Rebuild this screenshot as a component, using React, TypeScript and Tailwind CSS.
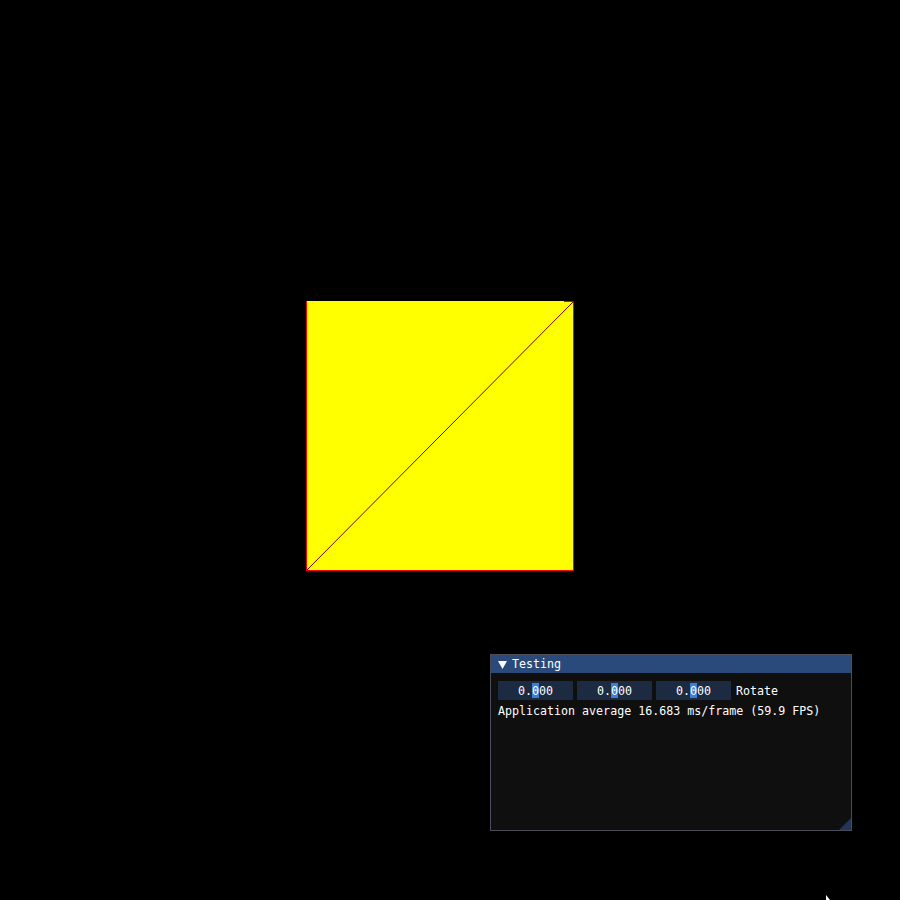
import React from 'react';

// Small drag-float input like Dear ImGui renders it
const FloatInput = ({ value }: { value: string }) => (
    <div className="w-[75px] h-[19px] bg-[#1c2b41] flex items-center justify-center">
        <span className="translate-y-px">{value.slice(0, 2)}</span>
        <span className="bg-[#3b7fd6] h-[15px] flex items-center"><span className="translate-y-px">{value.slice(2, 3)}</span></span>
        <span className="translate-y-px">{value.slice(3)}</span>
    </div>
);

const App = () => {
    return (
        <div className="relative w-[900px] h-[900px] bg-black overflow-hidden">

            {/* Rendered quad (canvas content) */}
            <svg className="absolute left-0 top-0" width="900" height="900" viewBox="0 0 900 900">
                <rect x="306" y="301" width="268" height="270" fill="#ffff00" />
                <line x1="306.5" y1="301" x2="306.5" y2="571" stroke="#ff0000" strokeWidth="1" />
                <line x1="306" y1="570.5" x2="574" y2="570.5" stroke="#ff0000" strokeWidth="1" />
                <line x1="573.5" y1="301" x2="573.5" y2="571" stroke="#ff0000" strokeWidth="1" />
                <line x1="564" y1="301.5" x2="574" y2="301.5" stroke="#ff0000" strokeWidth="1" />
                <line x1="307" y1="570" x2="574" y2="301" stroke="#7a0000" strokeWidth="1" />
                {/* mouse cursor */}
                <path d="M826 895 L826 900 L830 900 Z" fill="#ffffff" />
            </svg>

            {/* ImGui window */}
            <div className="absolute left-[490px] top-[654px] w-[362px] h-[177px] bg-[#0f0f0f] border border-[#4b4b5a] flex flex-col text-white text-[11.65px] leading-none font-['DejaVu_Sans_Mono','Liberation_Mono',monospace]">
                <div className="h-[18px] bg-[#294a7a] flex items-center pl-[7px] gap-[5px]">
                    <svg width="9" height="8" viewBox="0 0 9 8" className="translate-y-px">
                        <path d="M0 0 L9 0 L4.5 8 Z" fill="#ffffff" />
                    </svg>
                    <span className="translate-y-px">Testing</span>
                </div>
                <div className="relative flex-1 flex flex-col gap-[5px] pt-[8px] pl-[7px]">
                    <div className="flex items-center gap-[4px]">
                        <FloatInput value="0.000" />
                        <FloatInput value="0.000" />
                        <FloatInput value="0.000" />
                        <span className="ml-[1px] translate-y-px">Rotate</span>
                    </div>
                    <div className="translate-y-px">Application average 16.683 ms/frame (59.9 FPS)</div>
                    {/* resize grip */}
                    <svg className="absolute right-0 bottom-0" width="12" height="12" viewBox="0 0 12 12">
                        <path d="M12 0 L12 12 L0 12 Z" fill="#1f3658" />
                    </svg>
                </div>
            </div>
        </div>
    );
};

export default App;
